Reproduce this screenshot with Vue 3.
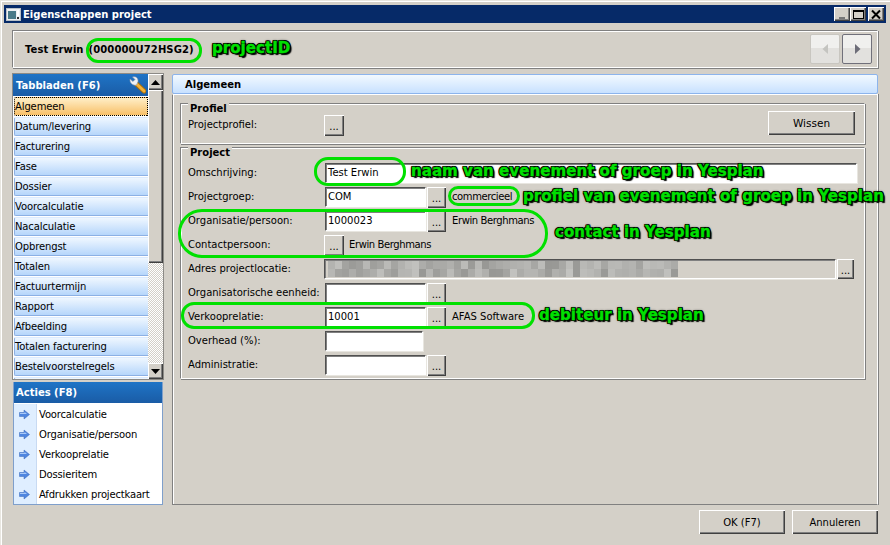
<script setup>
const tabs = ['Algemeen','Datum/levering','Facturering','Fase','Dossier','Voorcalculatie','Nacalculatie','Opbrengst','Totalen','Factuurtermijn','Rapport','Afbeelding','Totalen facturering','Bestelvoorstelregels','']
const actions = ['Voorcalculatie','Organisatie/persoon','Verkooprelatie','Dossieritem','Afdrukken projectkaart']
let seed = 11
const rnd = () => { seed = (seed * 9301 + 49297) % 233280; return seed / 233280 }
const blur = Array.from({ length: 100 }, () => {
  const v = Math.round(150 + rnd() * 45)
  return `rgb(${v},${v},${v - 3})`
})
</script>

<template>
  <div class="window">
    <div class="title">
      <svg class="appicon" width="15" height="13" viewBox="0 0 15 13">
        <rect x="0.5" y="0.5" width="14" height="12" fill="#eef0f2" stroke="#b8c0c8"/>
        <rect x="2" y="3" width="8" height="8" fill="#4a7a88"/>
        <rect x="11" y="2" width="2" height="6" fill="#fff"/>
        <rect x="11" y="9" width="2" height="2" fill="#333"/>
      </svg>
      <span class="title-text">Eigenschappen project</span>
      <div class="winbtns">
        <button class="winbtn"><svg width="15" height="13"><rect x="4" y="9" width="6" height="2" fill="#777"/></svg></button>
        <button class="winbtn"><svg width="15" height="13"><rect x="2.5" y="2.5" width="10" height="8" fill="none" stroke="#000"/><rect x="2" y="2" width="11" height="2" fill="#000"/></svg></button>
        <button class="winbtn closebtn"><svg width="15" height="13"><path d="M3 2.5 L11 10.5 M11 2.5 L3 10.5" stroke="#000" stroke-width="2"/></svg></button>
      </div>
    </div>

    <div class="head">
      <span class="head-name">Test Erwin</span>
      <span class="head-id">(000000U72HSG2)</span>
      <div class="nav">
        <div class="navbtn disabled"><svg width="7" height="11"><path d="M6 0 V10 L0.5 5 Z" fill="#c4c4c0"/></svg></div>
        <div class="navbtn"><svg width="7" height="11"><path d="M1 0 V10 L6.5 5 Z" fill="#6d6d78"/></svg></div>
      </div>
    </div>

    <div class="columns">
      <aside class="side">
        <div class="tabs">
          <div class="tabs-main">
            <div class="blue-head">
              <span>Tabbladen (F6)</span>
              <svg class="wrench" width="17" height="18" viewBox="0 0 17 18">
                <path d="M6.5 7 L15 15" stroke="#a8700c" stroke-width="5" stroke-linecap="round"/>
                <path d="M6.5 7 L15 15" stroke="#f4b238" stroke-width="3" stroke-linecap="round"/>
                <path d="M1 3 L4 5.5 L6 3.5 L3.5 1 C6.5 -0.2 9.5 2 9 5.5 L7.5 9 C4 10 0.5 7 1 3 Z" fill="#eef1f6" stroke="#8a96a8" stroke-width="0.6"/>
              </svg>
            </div>
            <div class="tablist">
              <div v-for="(t, i) in tabs" :key="i" class="tab" :class="{ active: i === 0 }">{{ t }}</div>
            </div>
          </div>
          <div class="scroll">
            <div class="sbtn"><svg width="9" height="5"><path d="M4.5 0 L9 5 H0 Z" fill="#000"/></svg></div>
            <div class="thumb"></div>
            <div class="strack"></div>
            <div class="sbtn"><svg width="9" height="5"><path d="M0 0 H9 L4.5 5 Z" fill="#000"/></svg></div>
          </div>
        </div>
        <div class="acts">
          <div class="blue-head"><span>Acties (F8)</span></div>
          <div class="actlist">
            <div v-for="a in actions" :key="a" class="act">
              <div class="act-icon">
                <svg width="11" height="11" viewBox="0 0 11 11"><path d="M0.5 3.5 H5 V1 L10.5 5.5 L5 10 V7.5 H0.5 Z" fill="#4f86e0" stroke="#3a68b8" stroke-width="0.5"/><path d="M1 4 H5.5 V3 L8 5 H1 Z" fill="#a8c8f8"/></svg>
              </div>
              <span>{{ a }}</span>
            </div>
          </div>
        </div>
      </aside>

      <main class="main">
        <div class="main-head">Algemeen</div>
        <div class="main-body">
          <div class="group profiel">
            <span class="legend">Profiel</span>
            <div class="row">
              <label>Projectprofiel:</label>
              <button class="dots solo">...</button>
              <button class="btn wissen">Wissen</button>
            </div>
          </div>
          <div class="group project">
            <span class="legend">Project</span>
            <div class="row"><label>Omschrijving:</label><div class="input full">Test Erwin</div></div>
            <div class="row"><label>Projectgroep:</label><div class="input">COM</div><button class="dots">...</button><span class="note">commercieel</span></div>
            <div class="row"><label>Organisatie/persoon:</label><div class="input">1000023</div><button class="dots">...</button><span class="note">Erwin Berghmans</span></div>
            <div class="row"><label>Contactpersoon:</label><button class="dots solo">...</button><span class="note near">Erwin Berghmans</span></div>
            <div class="row">
              <label>Adres projectlocatie:</label>
              <div class="input address">
                <div class="mosaic"><i v-for="(c, i) in blur" :key="i" :style="{ background: c }"></i></div>
              </div>
              <button class="dots small">...</button>
            </div>
            <div class="row"><label>Organisatorische eenheid:</label><div class="input"></div><button class="dots">...</button></div>
            <div class="row"><label>Verkooprelatie:</label><div class="input">10001</div><button class="dots">...</button><span class="note afas">AFAS Software</span></div>
            <div class="row"><label>Overhead (%):</label><div class="input short"></div></div>
            <div class="row"><label>Administratie:</label><div class="input"></div><button class="dots">...</button></div>
          </div>
        </div>
      </main>
    </div>

    <div class="footer">
      <button class="btn foot">OK (F7)</button>
      <button class="btn foot">Annuleren</button>
    </div>

    <div class="ring r1"></div>
    <div class="ring r2"></div>
    <div class="ring r3"></div>
    <div class="ring r4"></div>
    <div class="ring r5"></div>
    <span class="mark m1">projectID</span>
    <span class="mark m2">naam van evenement of groep in Yesplan</span>
    <span class="mark m3">profiel van evenement of groep in Yesplan</span>
    <span class="mark m4">contact in Yesplan</span>
    <span class="mark m5">debiteur in Yesplan</span>
  </div>
</template>

<style>
html, body { margin: 0; background: #d4d0c8; }
</style>

<style scoped>
* { box-sizing: border-box; }
.window {
  position: relative;
  width: 890px;
  height: 545px;
  overflow: hidden;
  padding: 5px 4px 0;
  background: #d4d0c8;
  color: #000;
  font: 10px "DejaVu Sans", Verdana, sans-serif;
  box-shadow: inset 1px 1px 0 #e8e6e0, inset 2px 2px 0 #fff;
}
button { font: inherit; color: #000; padding: 0; margin: 0; }

.title {
  height: 18px;
  background: #062a68;
  display: flex;
  align-items: center;
  padding-left: 2px;
  color: #fff;
}
.appicon { margin-right: 2px; }
.title-text { font-weight: bold; font-size: 10px; }
.winbtns { margin-left: auto; display: flex; margin-right: 2px; }
.winbtn {
  width: 16px;
  height: 14px;
  background: #d4d0c8;
  border: 0;
  box-shadow: inset 1px 1px 0 #fff, inset -1px -1px 0 #404040, inset -2px -2px 0 #808080;
  display: flex;
  align-items: center;
  justify-content: center;
}
.closebtn { margin-left: 2px; }

.head {
  height: 38px;
  margin: 7px 8px 0;
  padding-left: 12px;
  display: flex;
  align-items: center;
  border: 1px solid #808080;
  border-right-color: #fff;
  border-bottom-color: #fff;
  box-shadow: inset 1px 1px 0 #fff, 1px 1px 0 #808080;
  font-weight: bold;
  font-size: 10px;
}
.head-name { letter-spacing: 0.05px; }
.head-id { margin-left: 5px; letter-spacing: 0.1px; }
.nav { margin-left: auto; display: flex; gap: 2px; margin-right: 5px; }
.navbtn {
  width: 30px;
  height: 30px;
  border: 1px solid #70707a;
  border-radius: 2px;
  background: linear-gradient(#f0f0ee 0 46%, #e2e1de 46% 100%);
  display: flex;
  align-items: center;
  justify-content: center;
}
.navbtn.disabled { border-color: #c8c6c0; }

.columns {
  display: flex;
  gap: 9px;
  margin: 6px 8px 0 9px;
  height: 431px;
}
.side { width: 150px; display: flex; flex-direction: column; gap: 3px; }
.tabs { display: flex; height: 305px; outline: 1px solid #8c8a86; }
.tabs-main { width: 135px; display: flex; flex-direction: column; }
.blue-head {
  flex: none;
  height: 22px;
  padding-left: 3px;
  display: flex;
  align-items: center;
  justify-content: space-between;
  background: linear-gradient(#1f74c6, #1a5ca6);
  color: #fff;
  font-weight: bold;
  font-size: 10px;
}
.wrench { margin-right: 2px; }
.tablist { flex: 1; overflow: hidden; background: #fff; padding: 1px 0 0 1px; }
.tab {
  height: 19px;
  margin-bottom: 1px;
  padding-left: 0;
  line-height: 18px;
  letter-spacing: -0.12px;
  white-space: nowrap;
  border: 1px solid #8cb0e4;
  border-right: 0;
  border-top-color: #dcebff;
  border-radius: 2px 0 0 2px;
  background: linear-gradient(#eff7ff, #b6d6fb);
}
.tab.active {
  border: 1px dotted #000;
  background: linear-gradient(#ffefc8, #f8c068);
}
.scroll { width: 15px; display: flex; flex-direction: column; background: #d4d0c8; }
.sbtn {
  flex: none;
  height: 16px;
  background: #d4d0c8;
  box-shadow: inset 1px 1px 0 #fff, inset -1px -1px 0 #404040, inset -2px -2px 0 #808080;
  display: flex;
  align-items: center;
  justify-content: center;
}
.thumb {
  flex: none;
  height: 173px;
  background: #d4d0c8;
  box-shadow: inset 1px 1px 0 #fff, inset -1px -1px 0 #404040, inset -2px -2px 0 #808080;
}
.strack {
  flex: 1;
  background: repeating-conic-gradient(#fff 0 25%, #d4d0c8 0 50%) 0 0 / 2px 2px;
}

.acts {
  flex: 1;
  border: 1px solid #7f9fcb;
  border-top: 0;
  display: flex;
  flex-direction: column;
  background: #fff;
}
.acts .blue-head { height: 21px; padding-left: 2px; }
.actlist { flex: 1; display: flex; flex-direction: column; padding-top: 1px; letter-spacing: -0.17px; }
.act { height: 20px; display: flex; align-items: center; gap: 2px; }
.act-icon {
  width: 23px;
  height: 20px;
  display: flex;
  align-items: center;
  justify-content: center;
  background: #dfeeff;
  border-right: 1px solid #c8daf2;
  padding-right: 2px;
}

.main { flex: 1; display: flex; flex-direction: column; }
.main-head {
  height: 20px;
  padding-left: 12px;
  line-height: 19px;
  font-weight: bold;
  font-size: 10px;
  border: 1px solid #8cb4ec;
  border-radius: 2px;
  background: linear-gradient(#f2f9ff, #c8e1ff);
}
.main-body {
  flex: 1;
  padding: 8px 12px 0 7px;
  border: 1px solid #808080;
  border-right-color: #fff;
  border-bottom-color: #808080;
  border-top-color: #fff;
  box-shadow: inset 1px 0 0 #fff, 1px 0 0 #808080;
}
.group {
  position: relative;
  border: 1px solid #808080;
  border-right-color: #fff;
  border-bottom-color: #fff;
  box-shadow: inset 1px 1px 0 #fff, 1px 1px 0 #808080;
  padding-left: 7px;
}
.profiel { height: 41px; margin-bottom: 3px; padding-top: 9px; }
.project { height: 232px; padding-top: 13px; }
.legend {
  position: absolute;
  left: 7px;
  top: -1px;
  transform: translateY(-1px);
  background: #d4d0c8;
  padding: 0 2px;
  font-weight: bold;
  font-size: 10px;
  line-height: 13px;
}
.row { height: 24px; display: flex; align-items: center; }
label { width: 137px; flex: none; margin-top: -1px; }
.input {
  width: 101px;
  height: 20px;
  padding-left: 2px;
  line-height: 18px;
  background: #fff;
  border: 1px solid;
  border-color: #505050 #fff #fff #505050;
  box-shadow: inset 1px 1px 0 #808080, 1px 1px 0 #e8e6e0;
  font-size: 10px;
}
.input.full { width: 532px; }
.input.short { width: 98px; }
.input.address {
  width: 512px;
  margin-left: -1px;
  background: #d4d0c8;
  position: relative;
  padding: 1px 0 0 3px;
}
.mosaic {
  display: grid;
  grid-template-columns: repeat(50, 7px);
  grid-auto-rows: 8px;
  filter: blur(0.3px);
}
.mosaic i { display: block; }
.dots {
  width: 19px;
  height: 21px;
  margin-left: 1px;
  background: #d4d0c8;
  border: 0;
  box-shadow: inset 1px 1px 0 #fff, inset -1px -1px 0 #404040, inset -2px -2px 0 #808080;
  line-height: 19px;
  padding-top: 2px;
  font-size: 10px;
}
.dots.solo { width: 20px; margin-left: -1px; }
.dots.small { width: 17px; height: 20px; margin-left: 1px; }
.note { margin-left: 6px; margin-top: -2px; letter-spacing: -0.4px; }
.note.afas { letter-spacing: 0; }
.note.near { margin-left: 5px; }
.btn {
  background: #d4d0c8;
  border: 0;
  box-shadow: inset 1px 1px 0 #fff, inset -1px -1px 0 #404040, inset -2px -2px 0 #808080;
  font-size: 10px;
}
.wissen { width: 87px; height: 24px; margin-left: auto; margin-right: 9px; margin-top: -4px; font-size: 10.5px; }
.footer {
  display: flex;
  justify-content: flex-end;
  gap: 7px;
  margin: 5px 8px 0 0;
}
.foot { width: 86px; height: 24px; }

.ring { position: absolute; border: 3px solid #00e000; }
.r1 { left: 86px; top: 38px; width: 116px; height: 25px; border-radius: 12px; }
.r2 { left: 314px; top: 157px; width: 92px; height: 29px; border-radius: 14px; }
.r3 { left: 448px; top: 186px; width: 72px; height: 20px; border-radius: 10px; }
.r4 { left: 178px; top: 209px; width: 370px; height: 49px; border-radius: 24px; }
.r5 { left: 181px; top: 302px; width: 354px; height: 27px; border-radius: 13px; }

.mark {
  position: absolute;
  white-space: nowrap;
  color: #00e000;
  font: bold 15.1px/18px "DejaVu Sans", Verdana, sans-serif;
  -webkit-text-stroke: 0.3px #00e000;
  text-shadow:
    1px 0 0 #000, -1px 0 0 #000, 0 1px 0 #000, 0 -1px 0 #000,
    1px 1px 0 #000, -1px 1px 0 #000, 1px -1px 0 #000, -1px -1px 0 #000,
    2px 2px 1px #000, 0 0 3px #000;
}
.m1 { left: 212px; top: 39px; }
.m2 { left: 411px; top: 162px; }
.m3 { left: 523px; top: 187px; }
.m4 { left: 555px; top: 223px; }
.m5 { left: 539px; top: 306px; }
</style>
